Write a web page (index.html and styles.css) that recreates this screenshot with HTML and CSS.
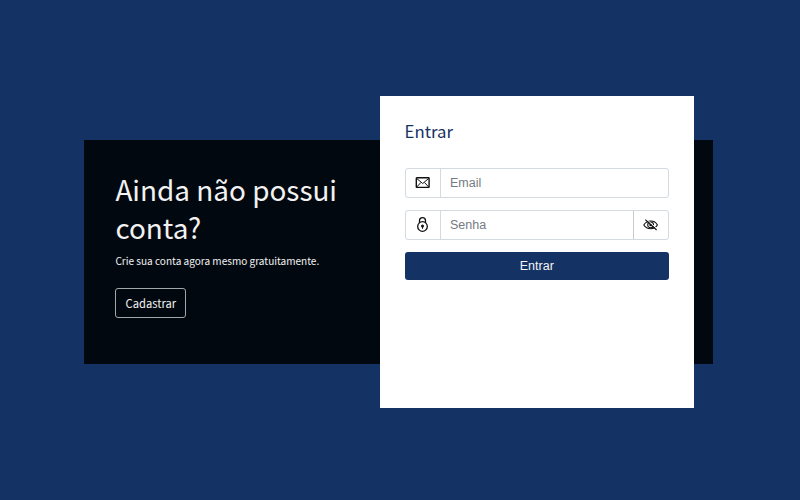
FILE: index.html
```html
<!DOCTYPE html>
<html lang="pt-BR">
<head>
<meta charset="utf-8">
<title>Entrar</title>
<link rel="stylesheet" href="styles.css">
</head>
<body>
<main class="stage">
  <section class="signup">
    <h1 class="signup-title">Ainda não possui<br>conta?</h1>
    <p class="signup-text">Crie sua conta agora mesmo gratuitamente.</p>
    <a class="signup-button">Cadastrar</a>
  </section>
  <section class="login">
    <h2 class="login-title">Entrar</h2>
    <form class="form">
      <div class="field">
        <span class="addon"><svg width="16" height="12" viewBox="0 0 16 12" fill="none" stroke="#111" stroke-width="1.4"><rect x="1.300" y=".8" width="12.800" height="9.600" rx=".6"/><path d="M1.500 1.300 7.700 6.500l6.200-5.200M1.700 10l4.200-4.500M13.700 10 9.500 5.500" stroke-width="1"/></svg></span>
        <input class="input" type="text" placeholder="Email">
      </div>
      <div class="field">
        <span class="addon"><svg width="14" height="16" viewBox="0 0 14 16" fill="none" stroke="#111" stroke-width="1.3"><circle cx="6.500" cy="9.500" r="4.800"/><path d="M3.500 5.800V3.700a3 3 0 0 1 6 0v2.100"/><circle cx="6.500" cy="8.900" r="1.500" fill="#111" stroke="none"/><path d="M6.500 9v2.800" stroke-width="1"/></svg></span>
        <input class="input" type="text" placeholder="Senha">
        <span class="addon addon-end"><svg width="16" height="14" viewBox="0 0 16 14" fill="none" stroke="#111" stroke-width="1.1"><path d="M.8 7C4 2 11.500 1.500 14.400 7 11.500 12 4 12 .8 7z"/><circle cx="7.600" cy="6.900" r="2.900"/><circle cx="7.600" cy="7" r="1.300" fill="#111" stroke="none"/><path d="M3.100 1 14.300 11" stroke="#fff" stroke-width="1"/><path d="M2.300 1.600 13.600 12"/></svg></span>
      </div>
      <button class="submit" type="button">Entrar</button>
    </form>
  </section>
</main>
</body>
</html>
```
FILE: styles.css
```css
* {
  box-sizing: border-box;
}

body {
  margin: 0;
  height: 500px;
  overflow: hidden;
  background: #143264;
  font-family: "Noto Sans CJK JP", "Noto Sans", sans-serif;
}

.stage {
  display: grid;
  grid-template-columns: 84px 295.600px 314.400px 19px;
  grid-template-rows: 96px 44px 224px 44px;
}

.signup {
  grid-column: 2 / 5;
  grid-row: 3;
  padding: 31px 31.400px 0;
  background: #02080f;
  color: #f2f2f2;
}

.signup-title {
  margin: 0;
  font-size: 27.900px;
  font-weight: 400;
  line-height: 37.500px;
}

.signup-text {
  margin: 6px 0 18px;
  font-size: 10.060px;
  line-height: 18px;
}

.signup-button {
  display: flex;
  align-items: center;
  justify-content: center;
  width: 71px;
  height: 30px;
  border: 1px solid #a4a7aa;
  border-radius: 3px;
  font-size: 11.200px;
}

.login {
  grid-column: 3;
  grid-row: 2 / 5;
  padding: 23px 25px 0;
  background: #fff;
}

.login-title {
  margin: 0 0 25px;
  color: #143264;
  font-size: 16.750px;
  font-weight: 400;
  line-height: 24px;
}

.form {
  display: flex;
  flex-direction: column;
}

.field {
  display: flex;
  height: 30px;
  margin-bottom: 12px;
  overflow: hidden;
  border: 1px solid #d3dae1;
  border-radius: 3px;
}

.addon {
  display: flex;
  flex: none;
  align-items: center;
  justify-content: center;
  width: 35.400px;
  padding-bottom: 1px;
  border-right: 1px solid #d3dae1;
}

.addon-end {
  width: 35px;
  padding-bottom: 0;
  border-right: 0;
  border-left: 1px solid #c8ccd0;
}

.input {
  flex: 1;
  min-width: 0;
  padding: 0 9px 1px;
  border: 0;
  background: transparent;
  font: 12.500px "Liberation Sans", sans-serif;
}

.input::placeholder {
  color: #757b81;
}

.submit {
  height: 28px;
  padding: 0;
  border: 0;
  border-radius: 3px;
  background: #143264;
  color: #f5f5f5;
  font: 12.500px "Liberation Sans", sans-serif;
}
```
